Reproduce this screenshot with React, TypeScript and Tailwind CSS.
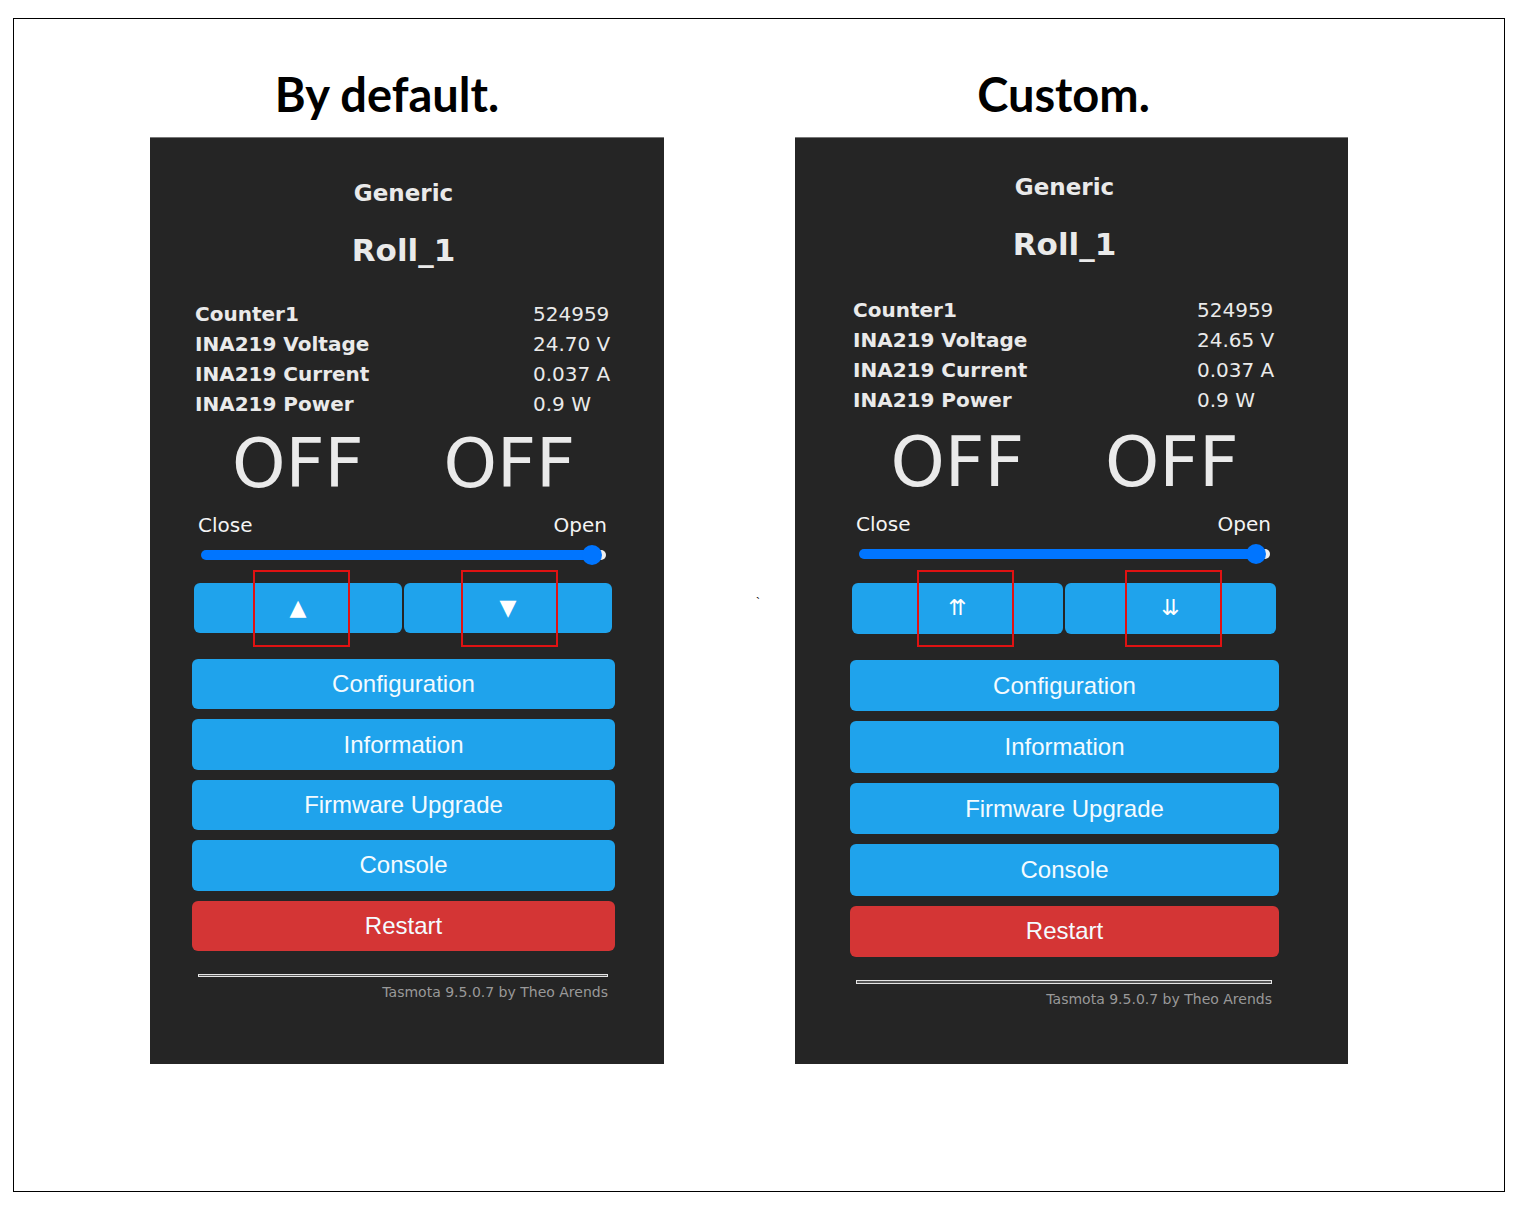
import { useId, useState } from "react";

type Shutter = { label: string; glyph: string; mark: string };

type PanelProps = {
  readings: [string, string][];
  shutters: Shutter[];
  body: string;
  name: string;
  table: string;
  valueCol: string;
  states: string;
  labels: string;
  shutterRow: string;
  menu: string;
  rule: string;
};

const menuItems = ["Configuration", "Information", "Firmware Upgrade", "Console", "Restart"];

function Panel(p: PanelProps) {
  const id = useId();
  const [position, setPosition] = useState(99);
  return (
    <main
      className={`flex flex-col border-t border-[#777] bg-[#252525] font-['DejaVu_Sans',Verdana,sans-serif] text-xl text-[#eaeaea] ${p.body}`}
    >
      <h3 className="text-center text-[23px] leading-[30px] font-bold">Generic</h3>
      <h2 className={`text-center text-[31px] leading-10 font-bold ${p.name}`}>Roll_1</h2>

      <table className={`ml-[3px] table-fixed border-collapse text-left leading-[30px] ${p.table}`}>
        <tbody>
          {p.readings.map(([label, value]) => (
            <tr key={label}>
              <th scope="row" className="p-0 font-bold whitespace-nowrap">
                {label}
              </th>
              <td className={`p-0 whitespace-nowrap ${p.valueCol}`}>{value}</td>
            </tr>
          ))}
        </tbody>
      </table>

      <div className={`grid grid-cols-2 text-center leading-[70px] ${p.states}`}>
        <span>OFF</span>
        <span>OFF</span>
      </div>

      <div className={`flex justify-between pr-2 pl-1.5 leading-[30px] text-[#f4f4f4] ${p.labels}`}>
        <label htmlFor={id}>Close</label>
        <span>Open</span>
      </div>
      <div className="mt-2.5 flex px-[9px]">
        <input
          id={id}
          type="range"
          min={0}
          max={100}
          value={position}
          onChange={(e) => setPosition(Number(e.target.value))}
          className="h-2.5 w-full appearance-none rounded-full bg-[#efefef] [&::-webkit-slider-thumb]:size-5 [&::-webkit-slider-thumb]:appearance-none [&::-webkit-slider-thumb]:rounded-full [&::-webkit-slider-thumb]:bg-[#0075ff]"
          style={{
            backgroundImage: `linear-gradient(to right, #0075ff ${position - 2}%, transparent ${position - 2}%)`,
          }}
        />
      </div>

      <div className={`mr-[3px] ml-0.5 grid grid-cols-2 gap-0.5 ${p.shutterRow}`}>
        {p.shutters.map((s) => (
          <div key={s.label} className="relative flex">
            <button
              aria-label={s.label}
              className="w-full rounded-md bg-[#1fa3ec] text-[22px] text-white"
            >
              {s.glyph}
            </button>
            <span
              className={`pointer-events-none absolute -top-[13px] h-[77px] w-[97px] border-2 border-[#e01212] ${s.mark}`}
            />
          </div>
        ))}
      </div>

      <nav
        className={`mt-[26px] flex flex-col gap-2.5 font-['Liberation_Sans',Arial,sans-serif] text-2xl text-[#f4fbff] ${p.menu}`}
      >
        {menuItems.map((item) => (
          <button
            key={item}
            className={`flex-1 rounded-md ${item === "Restart" ? "bg-[#d43535]" : "bg-[#1fa3ec]"}`}
          >
            {item}
          </button>
        ))}
      </nav>

      <hr className={`mr-[7px] ml-1.5 border ${p.rule}`} />
      <footer className="px-[7px] pt-[5px] text-right text-sm leading-5 text-[#999]">
        <a href="#tasmota">Tasmota 9.5.0.7 by Theo Arends</a>
      </footer>
    </main>
  );
}

export default function App() {
  return (
    <div className="flex min-h-screen bg-white pt-[18px] pr-2 pb-[13px] pl-[13px] text-black">
      <div className="flex-1 border border-black pt-[45px] pr-[156px] pb-[127px] pl-[136px]">
        <div className="grid grid-cols-[514fr_131fr_553fr]">
          <h1 className="pr-10 pb-[13px] text-center font-['Lato',Calibri,sans-serif] text-[47px] leading-[60px] font-bold">
            By default.
          </h1>
          <span />
          <h1 className="pr-4 pb-[13px] text-center font-['Lato',Calibri,sans-serif] text-[47px] leading-[60px] font-bold">
            Custom.
          </h1>

          <Panel
            readings={[
              ["Counter1", "524959"],
              ["INA219 Voltage", "24.70 V"],
              ["INA219 Current", "0.037 A"],
              ["INA219 Power", "0.9 W"],
            ]}
            shutters={[
              { label: "Open shutter", glyph: "▲", mark: "left-[59px]" },
              { label: "Close shutter", glyph: "▼", mark: "left-[57px]" },
            ]}
            body="pt-10 pr-[49px] pb-[62px] pl-[42px]"
            name="mt-[22px]"
            table="mt-[29px]"
            valueCol="w-[82px]"
            states="mt-2.5 text-[68px]"
            labels="mt-[11px]"
            shutterRow="mt-[23px] min-h-[50px]"
            menu="min-h-[292px]"
            rule="mt-[23px] h-[3px] border-[#e4e4e4] bg-[#555]"
          />
          <div className="pt-[458px] pl-[57px] text-center font-['Liberation_Sans',Arial,sans-serif] text-xs">
            `
          </div>
          <Panel
            readings={[
              ["Counter1", "524959"],
              ["INA219 Voltage", "24.65 V"],
              ["INA219 Current", "0.037 A"],
              ["INA219 Power", "0.9 W"],
            ]}
            shutters={[
              { label: "Open shutter", glyph: "⇈", mark: "left-[65px]" },
              { label: "Close shutter", glyph: "⇊", mark: "left-[60px]" },
            ]}
            body="pt-[34px] pr-[69px] pb-[53px] pl-[55px]"
            name="mt-[22px]"
            table="mt-[31px]"
            valueCol="w-[82px]"
            states="mt-3 text-[69px]"
            labels="mt-3"
            shutterRow="mt-6 min-h-[51px]"
            menu="min-h-[297px]"
            rule="mt-[23px] h-1 border-[#e4e4e4] bg-[#555]"
          />
        </div>
      </div>
    </div>
  );
}
